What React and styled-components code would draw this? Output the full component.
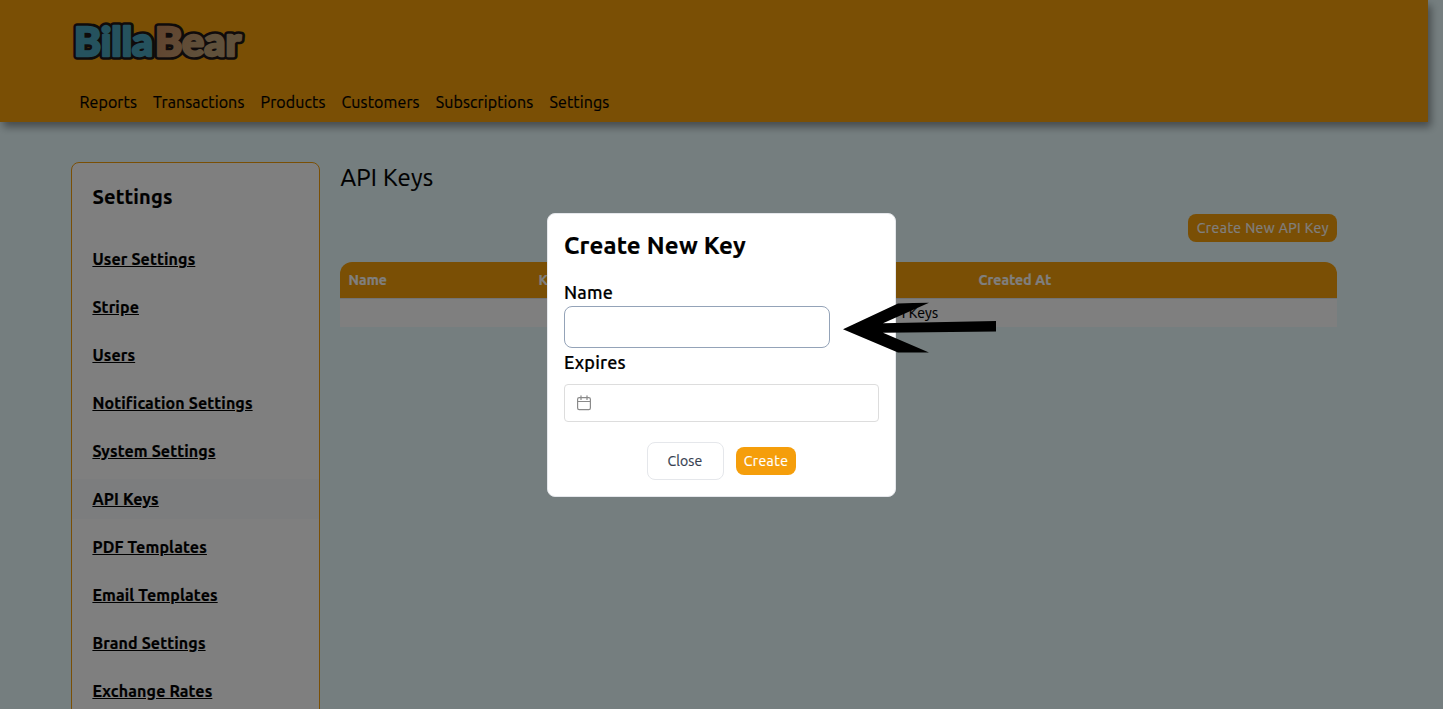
import React from 'react';
import styled, { createGlobalStyle } from 'styled-components';

const GlobalStyle = createGlobalStyle`
  * { box-sizing: border-box; }
  body {
    margin: 0;
    overflow: hidden;
    background: #ebfdff;
    color: #000;
    font-family: Ubuntu, "Noto Sans", "Open Sans", sans-serif;
    font-size: 16px;
    font-weight: 400;
    line-height: 24px;
    letter-spacing: 0.12px;
    -webkit-text-stroke-width: 0.2px;
  }
  h1, h2, h3 { margin: 0; }
`;

const Page = styled.div`
  position: relative;
  height: 709px;
  overflow: hidden;
`;

const Header = styled.header`
  width: 1428px;
  height: 122px;
  padding: 20px 71.4px 0;
  background: #f59e0b;
  box-shadow: 3px 5px 8px rgba(0, 0, 0, 0.4);
`;

const Logo = styled.svg`
  display: block;
  width: 176px;
  height: 44px;
  overflow: visible;
`;

const LogoText = styled.text`
  font-family: Lato, "DejaVu Sans", sans-serif;
  font-weight: 900;
  font-size: 40px;
  letter-spacing: 0;
  stroke-linejoin: round;
`;

const Nav = styled.nav`
  display: flex;
  gap: 16px;
  padding: 26px 8px 0;
`;

const NavItem = styled.a`
  white-space: nowrap;
`;

const Body = styled.div`
  display: flex;
  width: 1285.6px;
  margin: 40px 0 0 71.4px;
`;

const Sidebar = styled.aside`
  flex: none;
  width: 249px;
  height: 700px;
  padding-top: 15px;
  background: #fff;
  border: 1px solid #f59e0b;
  border-radius: 8px;
`;

const SidebarTitle = styled.h2`
  padding: 5px 20px;
  margin-bottom: 23px;
  font-size: 20px;
  font-weight: 700;
  line-height: 28px;
  letter-spacing: 0.2px;
`;

const SideItem = styled.div`
  height: 40px;
  padding: 8px 20px;
  margin-bottom: 8px;
  background: ${(p) => (p.$active ? '#f8fafc' : 'transparent')};
`;

const SideLink = styled.a`
  font-weight: 700;
  letter-spacing: 0.13px;
  text-decoration: underline;
`;

const Content = styled.main`
  flex: 1;
  padding: 0 20px;
`;

const PageTitle = styled.h1`
  font-size: 24px;
  font-weight: 400;
  line-height: 32px;
  letter-spacing: 0.25px;
`;

const Actions = styled.div`
  display: flex;
  justify-content: flex-end;
  margin: 20px 0;
`;

const PrimaryButton = styled.button`
  width: ${(p) => p.$width}px;
  height: 28px;
  padding: 0;
  border: 0;
  border-radius: 8px;
  background: #f59e0b;
  color: #fff;
  font-family: inherit;
  font-size: 14px;
  line-height: 20px;
  white-space: nowrap;
  letter-spacing: 0.45px;
`;

const Table = styled.div`
  width: 997px;
`;

const TableHead = styled.div`
  display: grid;
  grid-template-columns: 190px 440px 1fr;
  height: 36px;
  padding: 8px;
  border-radius: 12px 12px 0 0;
  background: #f59e0b;
  color: #fff;
  font-size: 14px;
  font-weight: 700;
  line-height: 20px;
`;

const EmptyRow = styled.div`
  display: flex;
  justify-content: center;
  height: 29px;
  padding-top: 4px;
  border-top: 1px solid #e5e7eb;
  background: #fff;
  font-size: 14px;
  line-height: 20px;
`;

const EmptyText = styled.span`
  width: 198.5px;
  text-align: right;
  white-space: nowrap;
`;

const Overlay = styled.div`
  position: absolute;
  inset: 0;
  display: flex;
  align-items: center;
  justify-content: center;
  background: rgba(0, 0, 0, 0.5);
`;

const Modal = styled.section`
  width: 349px;
  height: 284px;
  padding: 16px;
  border: 1px solid #e5e7eb;
  border-radius: 8px;
  background: #fff;
`;

const ModalTitle = styled.h2`
  margin-bottom: 18px;
  font-size: 24px;
  font-weight: 700;
  line-height: 32px;
  letter-spacing: 0.2px;
`;

const FieldLabel = styled.label`
  display: block;
  height: 26px;
  font-size: 18px;
  font-weight: 500;
  line-height: 24px;
  letter-spacing: 0.18px;
`;

const TextInput = styled.input`
  display: block;
  width: 266px;
  height: 42px;
  margin-bottom: 2px;
  border: 1px solid #94a3b8;
  border-radius: 8px;
  background: #fff;
`;

const DateInput = styled.div`
  display: flex;
  align-items: center;
  height: 38px;
  margin-top: 8px;
  padding-left: 11px;
  border: 1px solid #ddd;
  border-radius: 4px;
`;

const ModalActions = styled.div`
  display: flex;
  align-items: center;
  justify-content: center;
  gap: 12px;
  margin-top: 20px;
`;

const CloseButton = styled.button`
  width: 77px;
  height: 38px;
  padding: 0 1px 0 0;
  border: 1px solid #e5e7eb;
  border-radius: 8px;
  background: #fff;
  color: #374151;
  font-family: inherit;
  font-size: 14px;
  letter-spacing: 0.12px;
`;

const Pointer = styled.svg`
  position: absolute;
  left: 840px;
  top: 298px;
`;

const NAV = ['Reports', 'Transactions', 'Products', 'Customers', 'Subscriptions', 'Settings'];

const MENU = [
  'User Settings',
  'Stripe',
  'Users',
  'Notification Settings',
  'System Settings',
  'API Keys',
  'PDF Templates',
  'Email Templates',
  'Brand Settings',
  'Exchange Rates',
];

function LogoWord({ blue, tan }) {
  return (
    <>
      <tspan x="3" textLength="79" lengthAdjust="spacingAndGlyphs" fill={blue} stroke={blue}>Billa</tspan>
      <tspan x="84" textLength="86" lengthAdjust="spacingAndGlyphs" fill={tan} stroke={tan}>Bear</tspan>
    </>
  );
}

function BrandLogo() {
  return (
    <Logo viewBox="0 0 176 44">
      <defs>
        <linearGradient id="tan" gradientUnits="userSpaceOnUse" x1="84" y1="10" x2="130" y2="36">
          <stop offset="0" stopColor="#c4875c" />
          <stop offset="1" stopColor="#c0a276" />
        </linearGradient>
      </defs>
      <LogoText y="35.5" strokeWidth="7.6"><LogoWord blue="#1e1616" tan="#1e1616" /></LogoText>
      <LogoText y="35.5" strokeWidth="2.4"><LogoWord blue="#4aa4bc" tan="url(#tan)" /></LogoText>
    </Logo>
  );
}

export default function App() {
  return (
    <>
      <GlobalStyle />
      <Page>
        <Header>
          <BrandLogo />
          <Nav>
            {NAV.map((label) => (
              <NavItem key={label}>{label}</NavItem>
            ))}
          </Nav>
        </Header>
        <Body>
          <Sidebar>
            <SidebarTitle>Settings</SidebarTitle>
            {MENU.map((label) => (
              <SideItem key={label} $active={label === 'API Keys'}>
                <SideLink>{label}</SideLink>
              </SideItem>
            ))}
          </Sidebar>
          <Content>
            <PageTitle>API Keys</PageTitle>
            <Actions>
              <PrimaryButton $width={149}>Create New API Key</PrimaryButton>
            </Actions>
            <Table>
              <TableHead>
                <span>Name</span>
                <span>Key</span>
                <span>Created At</span>
              </TableHead>
              <EmptyRow>
                <EmptyText>No API Keys</EmptyText>
              </EmptyRow>
            </Table>
          </Content>
        </Body>
        <Overlay>
          <Modal>
            <ModalTitle>Create New Key</ModalTitle>
            <FieldLabel>Name</FieldLabel>
            <TextInput />
            <FieldLabel>Expires</FieldLabel>
            <DateInput>
              <svg width="16" height="16" viewBox="0 0 16 16" fill="none" stroke="#8a8a8a" strokeWidth="1.2" strokeLinecap="round">
                <rect x="1.6" y="2.6" width="12.8" height="12" rx="1.6" />
                <path d="M1.6 6.5h12.8M5 0.8v3.6M11 0.8v3.6" />
              </svg>
            </DateInput>
            <ModalActions>
              <CloseButton>Close</CloseButton>
              <PrimaryButton $width={60}>Create</PrimaryButton>
            </ModalActions>
          </Modal>
        </Overlay>
        <Pointer width="160" height="60" viewBox="0 0 160 60">
          <path d="M3 31.3L58 5.5Q73 4.8 89 4.7L43 25.2L156 23V33.5L43 34.8L89 54.5H58Z" fill="#000" />
        </Pointer>
      </Page>
    </>
  );
}
